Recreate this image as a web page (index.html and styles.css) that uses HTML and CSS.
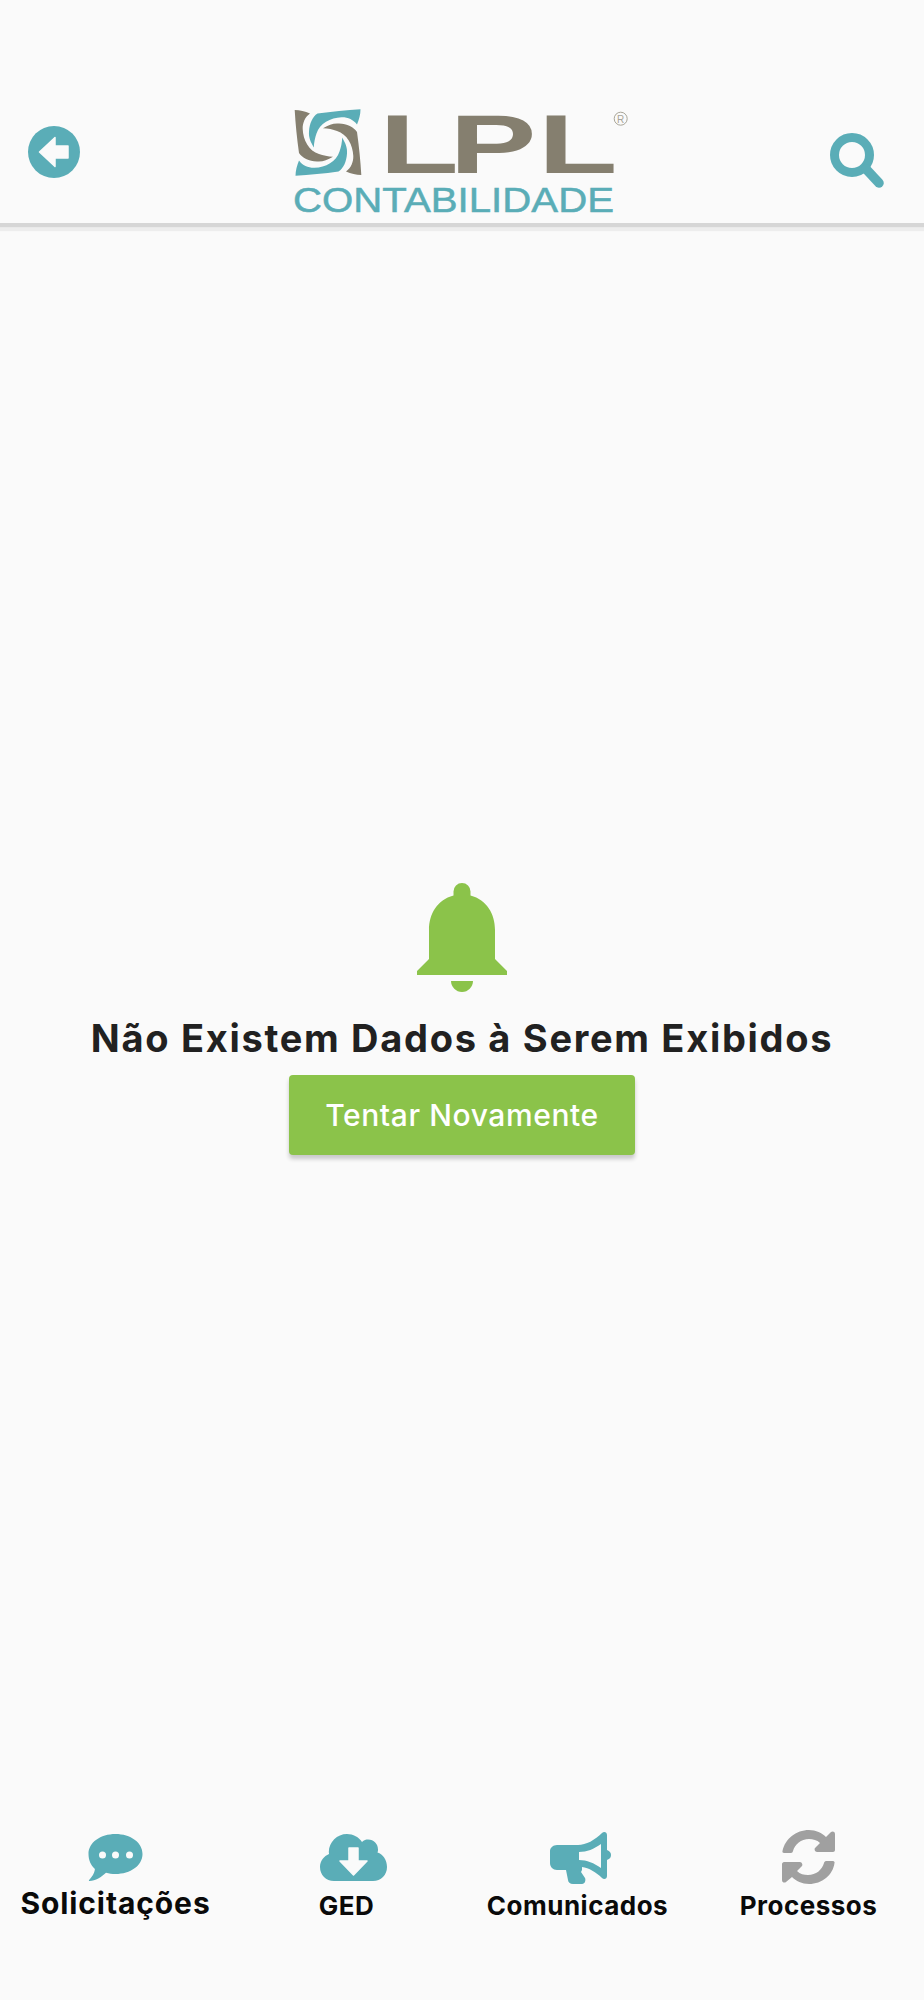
FILE: index.html
```html
<!DOCTYPE html>
<html lang="pt-BR">

<head>
    <meta charset="UTF-8">
    <meta name="viewport" content="width=device-width, initial-scale=1.0">
    <title>LPL Contabilidade</title>
    <link rel="stylesheet" href="styles.css">
</head>

<body>
    <div class="app">
        <header class="topbar">
            <svg class="back-icon" viewBox="0 0 52 52">
                <circle cx="26" cy="26" r="26" fill="#5aadb7" />
                <path d="M27 11.500 11.500 26 27 40.500V32h13V20H27z" fill="#fafafa" stroke="#fafafa" stroke-width="1.500" stroke-linejoin="round" />
            </svg>
            <svg class="logo" viewBox="0 -8 340 126">
                <defs>
                    <path id="blade" d="M1.700 6C7 6 12 7.500 17 9.500 12 13 9.500 19 9.700 25 10 36 16 47 26 50 30 51.500 35 52.500 40 52.700 34 56 30 58 24 57.500 16 57 9 54 6 49 4 35 2.500 20 1.700 6Z" />
                </defs>
                <use href="#blade" fill="#857f6f" />
                <use href="#blade" fill="#5aadb7" transform="rotate(90 35 38.500)" />
                <use href="#blade" fill="#857f6f" transform="rotate(180 35 38.500)" />
                <use href="#blade" fill="#5aadb7" transform="rotate(270 35 38.500)" />
                <text class="logo-lpl" transform="scale(1.550 1)" x="55.600 101 158" y="69">LPL</text>
                <circle cx="327.700" cy="14.700" r="6.500" fill="none" stroke="#a8a598" stroke-width="1" />
                <text class="logo-reg" x="327.700" y="18.500">R</text>
                <text class="logo-sub" x="0" y="108" textLength="321" lengthAdjust="spacingAndGlyphs">CONTABILIDADE</text>
            </svg>
            <svg class="search-icon" viewBox="0 0 54 55">
                <circle cx="22" cy="22" r="17.500" fill="none" stroke="#5aadb7" stroke-width="9" />
                <path d="M36 36 49 50" stroke="#5aadb7" stroke-width="9.500" stroke-linecap="round" />
            </svg>
        </header>

        <main class="empty">
            <svg class="bell-icon" viewBox="0 0 90 110">
                <path d="M45 0a8.500 8.500 0 0 1 8.500 8.500v4C70 17 78 31 78 47v29l12 12v4H0v-4l12-12V47c0-16 8-30 24.500-34.500v-4A8.500 8.500 0 0 1 45 0z" fill="#8bc34a" />
                <path d="M34 98h22c0 6-5 11-11 11s-11-5-11-11z" fill="#8bc34a" />
            </svg>
            <h1 class="empty-title">Não Existem Dados à Serem Exibidos</h1>
            <button type="button" class="retry">Tentar Novamente</button>
        </main>

        <nav class="tabs">
            <div class="tab">
                <svg class="tab-icon" viewBox="-13.500 0 81 48">
                    <path d="M27 0c15 0 27 8.500 27 20s-12 20-27 20c-3.500 0-6.500-.4-9.500-1.300C13 43 7 47 1 47c-.6 0-.8-.6-.4-1 2.500-2.500 5.400-6.500 5.800-11C2.400 31.500 0 26 0 20 0 8.500 12 0 27 0z" fill="#5aadb7" />
                    <circle cx="14" cy="21" r="3.500" fill="#fafafa" />
                    <circle cx="27" cy="21" r="3.500" fill="#fafafa" />
                    <circle cx="41" cy="21" r="3.500" fill="#fafafa" />
                </svg>
                <span class="tab-label tab-label-active">Solicitações</span>
            </div>
            <div class="tab">
                <svg class="tab-icon" viewBox="-14 0 81 48">
                    <path d="M14 47C6 47 0 41 0 33c0-6 4-11 9-13 0-1-.2-2-.2-2C9 8 17 0 27 0c6 0 12 3 15 8 2-2 4-2.500 6-2.500 6 0 10 4.500 10 10 0 1 0 2-.5 3C63 20 67 26 67 33c0 8-6 14-14 14z" fill="#5aadb7" />
                    <path d="M29 14h9v13h9L33.500 41 20 27h9z" fill="#fafafa" stroke="#fafafa" stroke-width="1.500" stroke-linejoin="round" />
                </svg>
                <span class="tab-label tab-label-low">GED</span>
            </div>
            <div class="tab">
                <svg class="tab-icon tab-icon-tall" viewBox="-6 0 68 54">
                    <path d="M7 15h21c8 0 17-5 24-12 2-2 5-1 5 2v15c3 1 4 3 4 5s-1 4-4 5v16c0 3-3 4-5 2-6-6-13-10-20-11v3l-1 2 4 6c1 2 0 6-3 6h-9c-3 0-5-2-5-4l-2-10H7c-4 0-7-3-7-7V21c0-3 3-6 7-6z" fill="#5aadb7" />
                    <path d="M29 22c8 0 15-3 22-8v24c-7-5-14-8-22-8z" fill="#fafafa" />
                </svg>
                <span class="tab-label">Comunicados</span>
            </div>
            <div class="tab">
                <svg class="tab-icon tab-icon-tall" viewBox="-7 0 68 54">
                    <path d="M27 0c7 0 13 3 17 7l5-5c1-1 4-1 4 2v16c0 1-1 2-2 2H35c-2 0-3-3-2-4l5-5c-3-3-7-4-11-4-8 0-14 5-16 12-.2 1-1 2-2 2H2c-1 0-2-1-1.500-2C3 9 14 0 27 0z" fill="#a0a0a0" />
                    <path d="M27 54c-7 0-13-3-17-7l-6 5c-1 1-4 1-4-2V34c0-1 1-2 2-2h16c2 0 3 3 2 4l-5 5c3 3 7 4 11 4 8 0 14-5 16-12 .2-1 1-2 2-2h7c1 0 2 1 1.500 2C51 45 40 54 27 54z" fill="#a0a0a0" />
                </svg>
                <span class="tab-label">Processos</span>
            </div>
        </nav>
    </div>
</body>

</html>
```

FILE: styles.css
```css
* {
    margin: 0;
    padding: 0;
    box-sizing: border-box;
}

body {
    background: #fafafa;
    font-family: Inter, "Liberation Sans", sans-serif;
}

.app {
    height: 2000px;
    display: flex;
    flex-direction: column;
}

.topbar {
    height: 223px;
    flex: none;
    padding: 104px 40px 0 28px;
    display: flex;
    justify-content: space-between;
    align-items: flex-start;
    background: #fafafa;
    box-shadow: 0 4px 1px #d6d6d6, 0 8px 1px #ededed;
}

.back-icon {
    width: 52px;
    height: 52px;
    margin-top: 22px;
}

.logo {
    width: 340px;
    height: 126px;
    margin: -8px 0 0 16px;
}

.logo-lpl {
    font-family: "Liberation Sans", sans-serif;
    font-weight: 700;
    font-size: 84px;
    fill: #857f6f;
}

.logo-reg {
    font-family: "Liberation Sans", sans-serif;
    font-size: 10px;
    text-anchor: middle;
    fill: #a8a598;
}

.logo-sub {
    font-family: "Liberation Sans", sans-serif;
    font-size: 35px;
    fill: #5aadb7;
    stroke: #5aadb7;
    stroke-width: .5px;
}

.search-icon {
    width: 54px;
    height: 55px;
    margin-top: 29px;
}

.empty {
    flex: 1;
    display: flex;
    flex-direction: column;
    align-items: center;
    justify-content: center;
}

.bell-icon {
    width: 90px;
    height: 110px;
}

.empty-title {
    margin-top: 22px;
    font-size: 38px;
    line-height: 46px;
    font-weight: 700;
    letter-spacing: 1.700px;
    color: #212121;
}

.retry {
    margin-top: 14px;
    width: 346px;
    height: 80px;
    border: none;
    border-radius: 4px;
    background: #8bc34a;
    color: #fff;
    font-family: inherit;
    font-size: 30px;
    font-weight: 500;
    letter-spacing: .6px;
    box-shadow: 0 4px 4px rgba(0, 0, 0, .2);
}

.tabs {
    height: 186px;
    flex: none;
    display: grid;
    grid-template-columns: repeat(4, 1fr);
}

.tab {
    display: flex;
    flex-direction: column;
    align-items: center;
}

.tab-icon {
    height: 48px;
    width: 81px;
    margin-top: 20px;
}

.tab-icon-tall {
    height: 54px;
    width: 68px;
    margin-top: 16px;
}

.tab-label {
    margin-top: 4px;
    font-size: 26px;
    line-height: 36px;
    font-weight: 700;
    letter-spacing: .5px;
    color: #0a0a0a;
}

.tab-label-low {
    margin-top: 6px;
}

.tab-label-active {
    margin-top: 3px;
    font-size: 30px;
    letter-spacing: .9px;
}
```
